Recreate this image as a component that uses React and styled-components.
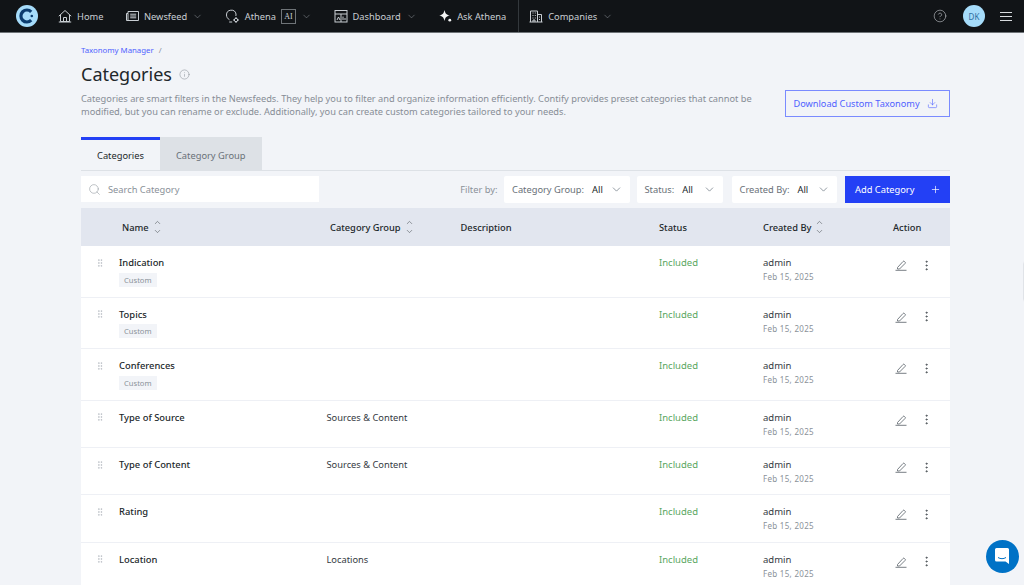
import React from "react"
import styled, { createGlobalStyle } from "styled-components"
import { ChevronDown, ChevronUp, CircleHelp, Download, GripVertical, Info, MoreVertical, Plus, Search } from "lucide-react"

const GlobalStyle = createGlobalStyle`
	* {
		box-sizing: border-box;
	}
	html, body {
		margin: 0;
		height: 100%;
		overflow: hidden;
		background: #f2f4f8;
		font-family: "Noto Sans", "Liberation Sans", sans-serif;
		color: #21272a;
	}
`

const rows = [
	{ name: "Indication", custom: true },
	{ name: "Topics", custom: true },
	{ name: "Conferences", custom: true },
	{ name: "Type of Source", group: "Sources & Content" },
	{ name: "Type of Content", group: "Sources & Content" },
	{ name: "Rating" },
	{ name: "Location", group: "Locations" },
]

const Logo = () => (
	<svg width="22" height="22" viewBox="0 0 22 22">
		<circle cx="11" cy="11" r="11" fill="#a6dcfa" />
		<path d="M15.2 6.8a6 6 0 1 0 0 8.4" fill="none" stroke="#0b3c6f" strokeWidth="3.2" />
		<circle cx="15.8" cy="11" r="1.3" fill="#0b3c6f" />
	</svg>
)

const HomeIcon = () => (
	<svg width="14" height="14" viewBox="0 0 14 14" fill="none" stroke="#c9ced3" strokeWidth="1">
		<path d="M0.8 7.2 7 1.5l6.2 5.7" />
		<path d="M2.5 6v6.5h9V6" />
		<path d="M5.5 12.5V8.5h3v4" />
		<path d="M0.8 13h12.4" />
	</svg>
)

const NewsIcon = () => (
	<svg width="14" height="14" viewBox="0 0 14 14" fill="none" stroke="#c9ced3" strokeWidth="1">
		<path d="M3 2.5h10.5v9H1.5V4.5H3z" />
		<path d="M3 4.5v7" />
		<path d="M5.2 5.2h6M5.2 7h6M5.2 8.8h6" />
	</svg>
)

const AthenaIcon = () => (
	<svg width="15" height="15" viewBox="0 0 15 15" fill="none" stroke="#c9ced3" strokeWidth="1">
		<path d="M4.5 10.8C2.5 9.6 1.5 8 1.5 6a4.8 4.8 0 0 1 9.5-1c.1.7 0 1.5-.2 2" />
		<path d="M4.2 13h3" />
		<circle cx="11" cy="11" r="1.7" />
		<path d="M11 8v1M11 13v1M8 11h1M13 11h1" />
	</svg>
)

const DashboardIcon = () => (
	<svg width="14" height="14" viewBox="0 0 14 14" fill="none" stroke="#c9ced3" strokeWidth="1">
		<rect x="1" y="1.5" width="12" height="11.5" />
		<path d="M1 5h12M7 5v8M3 11l1.5-3L6 11M9 11V7.5M11 11V9" />
	</svg>
)

const SparkIcon = () => (
	<svg width="14" height="14" viewBox="0 0 14 14" fill="#f4f4f4">
		<path d="M6.5 1c.6 3 1.700 4.900 5.300 5.500-3.600.6-4.700 2.500-5.300 5.500-.6-3-1.700-4.900-5.300-5.500C4.800 5.900 5.900 4 6.500 1z" />
		<circle cx="11.8" cy="11.2" r="1.4" />
	</svg>
)

const BuildingIcon = () => (
	<svg width="14" height="14" viewBox="0 0 14 14" fill="none" stroke="#c9ced3" strokeWidth="1">
		<path d="M0.5 13h13" />
		<path d="M1.5 13V2h7v11" />
		<path d="M8.5 5.5h4V13" />
		<path d="M3.5 4h1M5.8 4h1M3.5 6.5h1M5.8 6.5h1M3.5 9h1M5.8 9h1M10 8h1M10 10.5h1" />
		<path d="M4 13v-2h2v2" />
	</svg>
)

const PencilIcon = () => (
	<svg width="12" height="12" viewBox="0 0 12 12" fill="none" stroke="#697077" strokeWidth="0.9">
		<path d="M2.5 8.5 8 2.5a1 1 0 0 1 1.5 0l.5.5a1 1 0 0 1 0 1.5L4.500 10H2.500z" />
		<path d="M0.5 11.3h11" />
	</svg>
)

const ChatIcon = () => (
	<svg width="16" height="18" viewBox="0 0 16 18">
		<path d="M2.5 1h11A1.5 1.5 0 0 1 15 2.5V17l-3.5-2.500h-9A1.500 1.500 0 0 1 1 13V2.500A1.500 1.500 0 0 1 2.500 1z" fill="#fff" />
		<path d="M4 10.5c2.500 1.600 5.500 1.600 8 0" fill="none" stroke="#0072c6" strokeWidth="1" />
	</svg>
)

const SortIcon = () => (
	<SortStack>
		<ChevronUp size={9} strokeWidth={1.5} />
		<ChevronDown size={9} strokeWidth={1.5} />
	</SortStack>
)

const NavLink = ({ icon, label, chevron, badge }) => (
	<NavItem>
		{icon}
		<span>{label}</span>
		{badge && <AiBadge>{badge}</AiBadge>}
		{chevron && <ChevronDown size={11} strokeWidth={1} color="#a5abb2" />}
	</NavItem>
)

const FilterSelect = ({ label, width, pushed }) => (
	<FilterBox $width={width} $pushed={pushed}>
		<FilterLabel>{label}:</FilterLabel>
		<FilterValue>All</FilterValue>
		<ChevronDown size={13} strokeWidth={1.2} color="#5a6672" />
	</FilterBox>
)

const App = () => (
	<>
		<GlobalStyle />
		<Header>
			<LogoSlot>
				<Logo />
			</LogoSlot>
			<NavLink icon={<HomeIcon />} label="Home" />
			<NavLink icon={<NewsIcon />} label="Newsfeed" chevron />
			<NavLink icon={<AthenaIcon />} label="Athena" badge="AI" chevron />
			<NavLink icon={<DashboardIcon />} label="Dashboard" chevron />
			<NavLink icon={<SparkIcon />} label="Ask Athena" />
			<NavDivider />
			<NavLink icon={<BuildingIcon />} label="Companies" chevron />
			<HeaderRight>
				<CircleHelp size={14} strokeWidth={1} color="#c9cdd2" />
				<Avatar>DK</Avatar>
				<MenuLines>
					<span />
					<span />
					<span />
				</MenuLines>
			</HeaderRight>
		</Header>
		<Main>
			<Breadcrumb>
				<BreadcrumbLink>Taxonomy Manager</BreadcrumbLink>
				<BreadcrumbSlash>/</BreadcrumbSlash>
			</Breadcrumb>
			<TitleRow>
				<Title>Categories</Title>
				<TitleInfo>
					<Info size={11} strokeWidth={1.2} color="#8a9199" />
				</TitleInfo>
			</TitleRow>
			<IntroRow>
				<Intro>
					Categories are smart filters in the Newsfeeds. They help you to filter and organize
					information efficiently. Contify provides preset categories that cannot be modified, but
					you can rename or exclude. Additionally, you can create custom categories tailored to your
					needs.
				</Intro>
				<DownloadButton>
					Download Custom Taxonomy
					<Download size={11} strokeWidth={1.3} />
				</DownloadButton>
			</IntroRow>
			<Tabs>
				<Tab $active>Categories</Tab>
				<Tab>Category Group</Tab>
			</Tabs>
			<Toolbar>
				<SearchBox>
					<Search size={13} strokeWidth={1} color="#8a9199" />
					<span>Search Category</span>
				</SearchBox>
				<Filters>
					<FilterBy>Filter by:</FilterBy>
					<FilterSelect label="Category Group" width={126} />
					<FilterSelect label="Status" width={86} />
					<FilterSelect label="Created By" width={105} pushed />
					<AddButton>
						Add Category
						<Plus size={11} strokeWidth={1.5} />
					</AddButton>
				</Filters>
			</Toolbar>
			<Table>
				<HeadRow>
					<HeadCell $indent>
						Name <SortIcon />
					</HeadCell>
					<HeadCell>
						Category Group <SortIcon />
					</HeadCell>
					<HeadCell>Description</HeadCell>
					<HeadCell>Status</HeadCell>
					<HeadCell>
						Created By <SortIcon />
					</HeadCell>
					<HeadCell>Action</HeadCell>
				</HeadRow>
				{rows.map((row) => (
					<Row key={row.name} $custom={row.custom}>
						<NameCell>
							<Grip>
								<GripVertical size={10} strokeWidth={1.2} />
							</Grip>
							<div>
								<RowName>{row.name}</RowName>
								{row.custom && <CustomTag>Custom</CustomTag>}
							</div>
						</NameCell>
						<GroupCell>{row.group}</GroupCell>
						<div />
						<StatusCell>Included</StatusCell>
						<div>
							<Creator>admin</Creator>
							<CreatedDate>Feb 15, 2025</CreatedDate>
						</div>
						<Actions>
							<PencilIcon />
							<MoreVertical size={13} strokeWidth={1.8} color="#4d5358" />
						</Actions>
					</Row>
				))}
			</Table>
		</Main>
		<EdgeTab />
		<ChatBubble>
			<ChatIcon />
		</ChatBubble>
	</>
)

const Header = styled.header`
	height: 33px;
	background: #111417;
	border-bottom: 1px solid #6f7478;
	display: flex;
	align-items: center;
	color: #c9ced3;
	font-size: 9.3px;
`

const LogoSlot = styled.div`
	width: 58px;
	padding-left: 16px;
	display: flex;
	align-items: center;
`

const NavItem = styled.div`
	display: flex;
	align-items: center;
	gap: 5px;
	margin-right: 21.5px;
`

const AiBadge = styled.span`
	width: 15px;
	height: 15px;
	border: 1px solid #6f7478;
	font-size: 8px;
	font-family: "Liberation Serif", serif;
	display: flex;
	align-items: center;
	justify-content: center;
`

const NavDivider = styled.div`
	width: 1px;
	height: 32px;
	background: #33383c;
	margin: 0 10px 0 -9.5px;
`

const HeaderRight = styled.div`
	margin-left: auto;
	display: flex;
	align-items: center;
	gap: 16px;
	padding-right: 12px;
`

const Avatar = styled.div`
	width: 22px;
	height: 22px;
	border-radius: 50%;
	background: #a6dcfa;
	color: #2f6f9f;
	font-size: 8px;
	display: flex;
	align-items: center;
	justify-content: center;
`

const MenuLines = styled.div`
	width: 12px;
	margin-left: -1px;
	display: flex;
	flex-direction: column;
	gap: 3px;

	span {
		height: 1px;
		background: #d8dbde;
	}
`

const Main = styled.main`
	padding: 12px 74px 0 81px;
`

const Breadcrumb = styled.div`
	font-size: 7.8px;
	display: flex;
	gap: 5px;
`

const BreadcrumbLink = styled.span`
	color: #4f62ff;
`

const BreadcrumbSlash = styled.span`
	color: #8a9199;
`

const TitleRow = styled.div`
	display: flex;
	align-items: center;
	gap: 7px;
	margin-top: 6.5px;
`

const Title = styled.h1`
	font-size: 18px;
	font-weight: 400;
	margin: 0;
	line-height: 24px;
`

const TitleInfo = styled.span`
	display: flex;
	margin-top: 2px;
`

const IntroRow = styled.div`
	display: flex;
	justify-content: space-between;
	align-items: flex-start;
	margin-top: 6px;
`

const Intro = styled.p`
	width: 680px;
	margin: 0;
	font-size: 9.25px;
	line-height: 13px;
	color: #878d96;
`

const DownloadButton = styled.button`
	width: 165px;
	height: 27px;
	margin-top: -1.5px;
	border: 1px solid #7a8bff;
	background: transparent;
	color: #4f62ff;
	font: inherit;
	font-size: 9.2px;
	display: flex;
	align-items: center;
	justify-content: space-between;
	padding: 0 11px 0 7.5px;
`

const Tabs = styled.div`
	display: flex;
	margin-top: 19.5px;
	border-bottom: 1px solid #dde1e6;
`

const Tab = styled.div`
	height: 33px;
	padding: 0 16px;
	font-size: 9.3px;
	display: flex;
	align-items: center;
	color: ${(props) => (props.$active ? "#21272a" : "#697077")};
	background: ${(props) => (props.$active ? "transparent" : "#dde1e6")};
	border-top: 3px solid ${(props) => (props.$active ? "#2340f5" : "#dde1e6")};
`

const Toolbar = styled.div`
	display: flex;
	justify-content: space-between;
	margin-top: 5px;
`

const SearchBox = styled.div`
	width: 238px;
	height: 26px;
	background: #fff;
	display: flex;
	align-items: center;
	gap: 7px;
	padding-left: 7px;
	font-size: 9.3px;
	color: #8a9199;
`

const Filters = styled.div`
	display: flex;
	align-items: center;
	gap: 6.5px;
`

const FilterBy = styled.span`
	font-size: 9.3px;
	color: #8a9199;
`

const FilterBox = styled.div`
	width: ${(props) => props.$width}px;
	height: 27px;
	margin-left: ${(props) => (props.$pushed ? "2.5px" : "0")};
	background: #fff;
	border-radius: 2px;
	display: flex;
	align-items: center;
	padding: 0 7px 0 8px;
	font-size: 9.3px;
`

const FilterLabel = styled.span`
	color: #697077;
	margin-right: 8px;
`

const FilterValue = styled.span`
	color: #21272a;
	margin-right: auto;
`

const AddButton = styled.button`
	width: 105px;
	height: 27px;
	margin-left: 2px;
	border: none;
	background: #2340f5;
	color: #fff;
	font: inherit;
	font-size: 9.3px;
	display: flex;
	align-items: center;
	justify-content: space-between;
	padding: 0 9px 0 10px;
`

const Table = styled.div`
	margin-top: 5px;
	background: #fff;
`

const columns = "249px 130.5px 198.5px 104px 130px 57px"

const HeadRow = styled.div`
	display: grid;
	grid-template-columns: ${columns};
	height: 38px;
	align-items: center;
	background: #e2e6ef;
`

const HeadCell = styled.div`
	font-size: 9.3px;
	font-weight: 500;
	display: flex;
	align-items: center;
	gap: 4px;
	padding-left: ${(props) => (props.$indent ? "41px" : "0")};
`

const SortStack = styled.span`
	display: inline-flex;
	flex-direction: column;
	color: #4d5358;
	line-height: 0;
`

const Row = styled.div`
	display: grid;
	grid-template-columns: ${columns};
	height: ${(props) => (props.$custom ? "51.6px" : "47.3px")};
	padding-top: 10px;
	border-bottom: 1px solid #eef0f5;
	font-size: 9.5px;
`

const NameCell = styled.div`
	display: flex;
	gap: 14px;
	padding-left: 14px;
`

const Grip = styled.span`
	color: #a2a9b0;
	line-height: 14px;
	padding-top: 1.5px;
`

const RowName = styled.div`
	font-size: 9.4px;
	font-weight: 500;
	line-height: 14px;
`

const CustomTag = styled.span`
	display: block;
	width: fit-content;
	margin-top: 2.5px;
	background: #f2f4f8;
	color: #8a9199;
	font-size: 7.6px;
	line-height: 10px;
	padding: 2px 5px;
`

const GroupCell = styled.div`
	margin-left: -3.5px;
	font-size: 9.3px;
	line-height: 14px;
	color: #343a3f;
`

const StatusCell = styled.div`
	line-height: 14px;
	color: #5aa75f;
`

const Creator = styled.div`
	line-height: 14px;
	color: #343a3f;
`

const CreatedDate = styled.div`
	font-size: 8px;
	line-height: 13px;
	color: #8a9199;
	letter-spacing: 0.3px;
`

const Actions = styled.div`
	display: flex;
	gap: 13px;
	padding-left: 2px;
	height: 18px;
	align-items: center;
`

const EdgeTab = styled.div`
	position: fixed;
	right: -10px;
	top: 260px;
	width: 11px;
	height: 43px;
	background: #fff;
	border: 1px solid #e0e3e8;
	border-radius: 4px;
`

const ChatBubble = styled.div`
	position: fixed;
	right: 5.5px;
	bottom: 12.5px;
	width: 33px;
	height: 33px;
	border-radius: 50%;
	background: #0072c6;
	display: flex;
	align-items: center;
	justify-content: center;
`

export default App
